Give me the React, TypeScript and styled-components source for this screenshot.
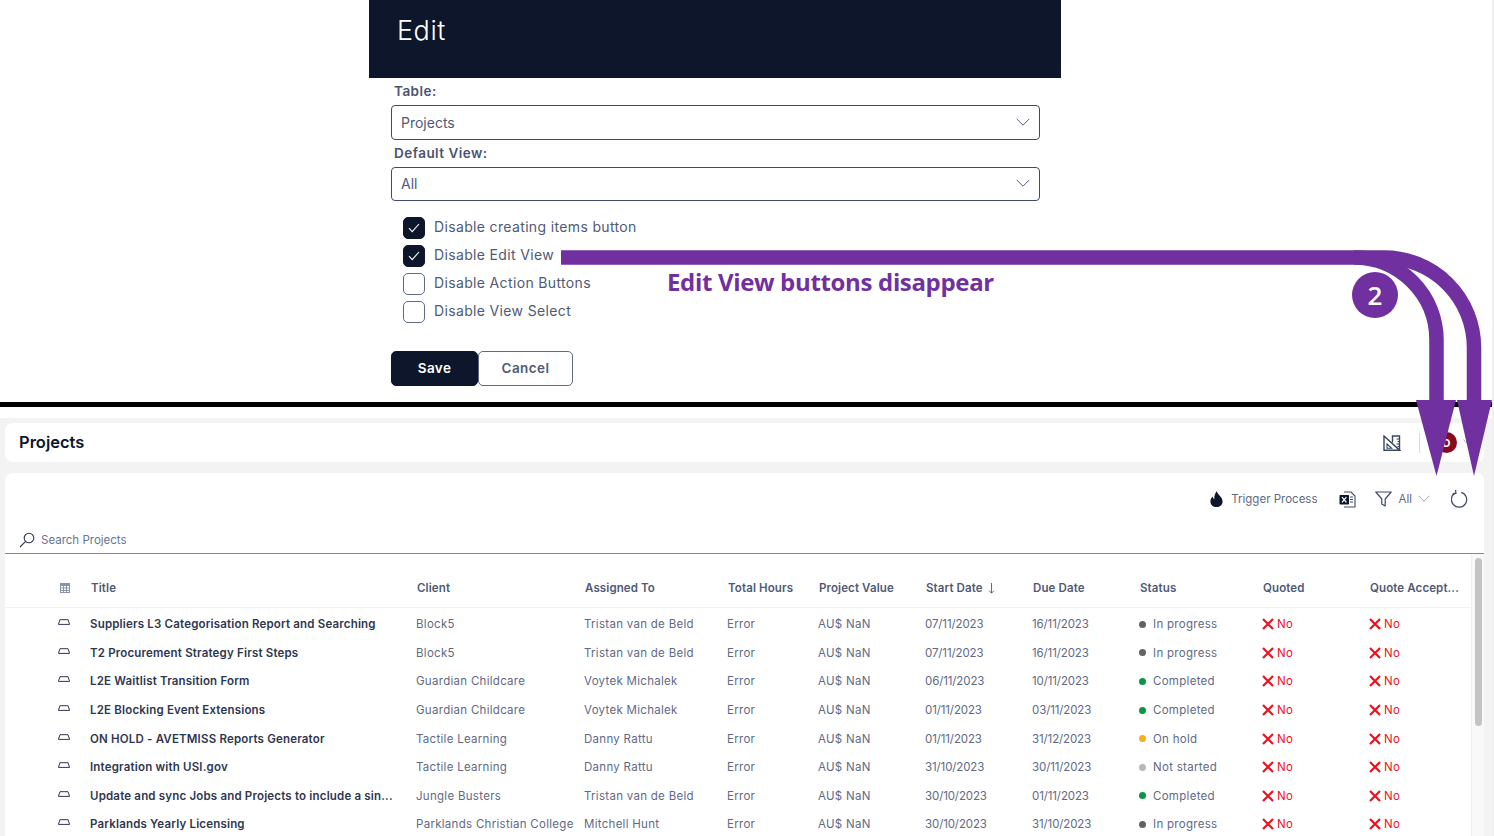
import React from "react";
import styled, { createGlobalStyle } from "styled-components";

const Global = createGlobalStyle`
  html, body {
    margin: 0;
    padding: 0;
    background: #fff;
    overflow: hidden;
  }
  * {
    box-sizing: border-box;
  }
`

const Page = styled.div`
  display: flex;
  width: 1494px;
  height: 836px;
  overflow: hidden;
  font-family: Inter, "Liberation Sans", sans-serif;
  background: #f0f0f0;
`

const Main = styled.div`
  position: relative;
  display: flex;
  flex-direction: column;
  width: 1492px;
  height: 836px;
  overflow: hidden;
  background: #fff;
`

const TopPane = styled.div`
  height: 402px;
  padding-left: 369px;
`

const Modal = styled.div`
  width: 692px;
`

const ModalHeader = styled.div`
  display: flex;
  align-items: center;
  height: 78px;
  padding: 0 0 17px 28px;
  background: #0d162a;
  color: #fff;
  font-size: 27px;
  letter-spacing: 0.02em;
  font-weight: 300;
`

const Form = styled.div`
  padding-left: 22px;
`

const FieldLabel = styled.div`
  display: flex;
  align-items: center;
  height: 27px;
  padding: 0 0 1px 3px;
  color: #4a5470;
  font-size: 13.5px;
  font-weight: 600;
  letter-spacing: 0.035em;
`

const Select = styled.div<{ $h: number }>`
  display: flex;
  align-items: center;
  justify-content: space-between;
  width: 649px;
  height: ${p => p.$h}px;
  padding: 0 9px 1px;
  border: 1px solid #3f4a66;
  border-radius: 4px;
  color: #4f5a75;
  font-size: 14px;
`

const CheckList = styled.div`
  display: flex;
  flex-direction: column;
  gap: 6px;
  margin: 16px 0 0 12px;
`

const CheckRow = styled.div`
  display: flex;
  align-items: center;
  gap: 9px;
  height: 22px;
  color: #4f5a75;
  font-size: 14px;
  letter-spacing: 0.025em;
`

const CheckLabel = styled.span`
  padding-bottom: 3px;
`

const CheckBox = styled.div<{ $on?: boolean }>`
  display: flex;
  align-items: center;
  justify-content: center;
  width: 22px;
  height: 22px;
  border-radius: 5px;
  border: 1px solid ${p => (p.$on ? "#0d162a" : "#5d6a88")};
  background: ${p => (p.$on ? "#0d162a" : "#fff")};
`

const Buttons = styled.div`
  display: flex;
  margin-top: 28px;
`

const Button = styled.div<{ $primary?: boolean }>`
  display: flex;
  align-items: center;
  justify-content: center;
  width: ${p => (p.$primary ? 87 : 95)}px;
  height: 35px;
  padding-bottom: 2px;
  border-radius: 5px;
  border: 1px solid ${p => (p.$primary ? "#0d162a" : "#5d6a88")};
  background: ${p => (p.$primary ? "#0d162a" : "#fff")};
  color: ${p => (p.$primary ? "#fff" : "#4f5a75")};
  font-size: 13.5px;
  font-weight: 600;
  letter-spacing: 0.03em;
`

const Rule = styled.div`
  height: 5px;
  background: #000;
  flex: none;
`

const BottomPane = styled.div`
  display: flex;
  flex-direction: column;
  gap: 11px;
  flex: 1;
  margin-top: 11px;
  padding: 5px 8px 0 5px;
  background: #f3f3f3;
  min-height: 0;
`

const TitleBar = styled.div`
  display: flex;
  align-items: center;
  justify-content: space-between;
  flex: none;
  height: 39px;
  padding: 0 10px 0 14px;
  background: #fff;
  border-radius: 8px;
`

const PageTitle = styled.div`
  color: #0d162a;
  font-size: 16.5px;
  font-weight: 600;
  padding-bottom: 1px;
`

const TitleTools = styled.div`
  display: flex;
  align-items: center;
`

const Divider = styled.div`
  width: 1px;
  height: 20px;
  margin: 0 16px 0 18px;
  background: #dcdcdc;
`

const Avatar = styled.div`
  display: flex;
  align-items: center;
  justify-content: center;
  width: 21px;
  height: 21px;
  margin-right: 6px;
  border-radius: 50%;
  background: #860b1e;
  color: #fff;
  font-size: 11px;
  font-weight: 700;
`

const Card = styled.div`
  position: relative;
  display: flex;
  flex-direction: column;
  flex: 1;
  background: #fff;
  border-radius: 8px 8px 0 0;
  overflow: hidden;
`

const Toolbar = styled.div`
  display: flex;
  align-items: center;
  justify-content: flex-end;
  height: 53px;
  padding: 0 16px 1px 0;
`

const Tool = styled.div<{ $gap: number; $inner?: number }>`
  display: flex;
  align-items: center;
  gap: ${p => p.$inner ?? 6}px;
  margin-left: ${p => p.$gap}px;
  color: #5f6a85;
  font-size: 11.5px;
`

const SearchBar = styled.div`
  display: flex;
  align-items: center;
  gap: 6px;
  height: 28px;
  padding-left: 14px;
  border-bottom: 1px solid #7e89a3;
  color: #6a7590;
  font-size: 11.5px;
`

const TableWrap = styled.div`
  display: flex;
  flex: 1;
  min-height: 0;
`

const Table = styled.div`
  flex: 1;
  min-width: 0;
`

const columns = "85px 326px 168px 143px 91px 107px 107px 107px 123px 107px 1fr"

const HeadRow = styled.div`
  display: grid;
  grid-template-columns: ${columns};
  align-items: center;
  height: 54px;
  padding-top: 15px;
  border-bottom: 1px solid #f2f2f2;
  color: #4f5a75;
  font-size: 11.5px;
  font-weight: 600;
  letter-spacing: 0.01em;
`

const HeadCell = styled.div`
  display: flex;
  align-items: center;
  gap: 5px;
  padding-left: 1px;
  white-space: nowrap;
`

const IconCell = styled.div<{ $lift?: number }>`
  display: flex;
  justify-content: flex-end;
  padding: 0 20px ${p => p.$lift ?? 0}px 0;
`

const BodyRow = styled.div`
  display: grid;
  grid-template-columns: ${columns};
  align-items: center;
  height: 28.6px;
  padding-top: 4px;
  color: #5f6a85;
  font-size: 11.5px;
  letter-spacing: 0.025em;
`

const Cell = styled.div`
  white-space: nowrap;
  overflow: hidden;
`

const DateCell = styled(Cell)`
  letter-spacing: -0.01em;
`

const TitleCell = styled(Cell)`
  padding-right: 12px;
  color: #2f3750;
  font-weight: 600;
  letter-spacing: 0.016em;
  text-overflow: ellipsis;
`

const StatusCell = styled.div`
  display: flex;
  align-items: center;
  gap: 7px;
`

const Dot = styled.span<{ $color: string }>`
  width: 7px;
  height: 7px;
  border-radius: 50%;
  background: ${p => p.$color};
`

const NoCell = styled.div`
  display: flex;
  align-items: center;
  gap: 3px;
  color: #f01020;
  font-size: 11.5px;
`

const ScrollTrack = styled.div`
  flex: none;
  width: 13px;
  padding: 4px 2px 0 3px;
  background: #f9f9f9;
  border-left: 1px solid #f0f0f0;
`

const ScrollThumb = styled.div`
  height: 168px;
  border-radius: 4px;
  background: #c4c4c4;
`

const Overlay = styled.svg`
  position: absolute;
  left: 0;
  top: 0;
  pointer-events: none;
`

const Callout = styled.div`
  position: absolute;
  left: 667px;
  top: 265px;
  color: #7030a0;
  font-family: "Open Sans", sans-serif;
  font-size: 24px;
  font-weight: 700;
  letter-spacing: -0.014em;
  white-space: nowrap;
`

const Badge = styled.div`
  position: absolute;
  left: 1352px;
  top: 272px;
  display: flex;
  align-items: center;
  justify-content: center;
  width: 46px;
  height: 46px;
  border-radius: 50%;
  background: #7030a0;
  color: #fff;
  font-family: "Open Sans", sans-serif;
  font-size: 26px;
  font-weight: 600;
`

const Chevron = ({ size = 14, color = "#4f5a75" }: { size?: number; color?: string }) => (
  <svg width={size} height={size * 0.6} viewBox="0 0 14 8" fill="none" stroke={color} strokeWidth="1">
    <path d="M0.7 0.7 L7 7 L13.3 0.7" />
  </svg>
)

const Check = () => (
  <svg width="12" height="10" viewBox="0 0 12 10" fill="none" stroke="#fff" strokeWidth="1.1">
    <path d="M1 5.2 L4.2 8.6 L11 1" />
  </svg>
)

const RulerIcon = () => (
  <svg width="18" height="16" viewBox="0 0 18 16" fill="none" stroke="#3a4560" strokeWidth="1.4">
    <path d="M1 1 L16.5 15.2 H1 Z" />
    <path d="M4 9 L8.6 13.2 H4 Z" strokeWidth="1.1" />
    <path d="M9.5 7.5 V1 H16.5 V15" />
    <path d="M13.5 4 H16.5 M14.5 6.5 H16.5 M13.5 9 H16.5 M14.5 11.5 H16.5" strokeWidth="1" />
  </svg>
)

const FlameIcon = () => (
  <svg width="13" height="16" viewBox="0 0 13 16" fill="#0d162a">
    <path d="M6.8 0 C7 3.2 12.6 5.8 12.6 10.4 C12.6 13.7 9.9 16 6.5 16 C3 16 0.4 13.6 0.4 10.4 C0.4 8.4 1.4 6.8 2.8 5.6 C2.9 6.9 3.4 7.7 4.3 8.2 C4.1 5 5.1 2 6.8 0 Z" />
  </svg>
)

const ExcelIcon = () => (
  <svg width="17" height="17" viewBox="0 0 17 17" fill="none">
    <path d="M5 1 H12 L16 5 V16 H5" stroke="#3f4a66" strokeWidth="1.1" />
    <path d="M11 6 H14 M11 8.5 H14 M11 11 H14" stroke="#3f4a66" strokeWidth="1" />
    <rect x="0.5" y="4" width="9.5" height="9.5" rx="0.8" fill="#0d162a" />
    <path d="M3 6.2 L7.4 11.4 M7.4 6.2 L3 11.4" stroke="#fff" strokeWidth="1.3" />
  </svg>
)

const FilterIcon = () => (
  <svg width="17" height="16" viewBox="0 0 17 16" fill="none" stroke="#3f4a66" strokeWidth="1.2" strokeLinejoin="round">
    <path d="M0.8 1 H16.2 L10.2 8 V15 L6.8 13 V8 Z" />
  </svg>
)

const RefreshIcon = () => (
  <svg width="17" height="18" viewBox="0 0 17 18" fill="none" stroke="#3f4a66" strokeWidth="1.25">
    <path d="M4.4 2.9 A7.6 7.6 0 1 0 10.3 2.3" />
    <path d="M4.6 0 L4.9 3.4 L1.8 3.7" />
  </svg>
)

const SearchIcon = () => (
  <svg width="16" height="16" viewBox="0 0 16 16" fill="none" stroke="#2f3750" strokeWidth="1.1">
    <circle cx="10" cy="6" r="4.8" />
    <path d="M6.4 9.6 L1 15" />
  </svg>
)

const ColumnsIcon = () => (
  <svg width="10" height="10" viewBox="0 0 10 10" fill="#8b93a8">
    <path d="M0 0 H10 V10 H0 Z M1 3 V4.5 H3 V3 Z M4 3 V4.5 H6 V3 Z M7 3 V4.5 H9 V3 Z M1 5.5 V7 H3 V5.5 Z M4 5.5 V7 H6 V5.5 Z M7 5.5 V7 H9 V5.5 Z M1 8 V9 H3 V8 Z M4 8 V9 H6 V8 Z M7 8 V9 H9 V8 Z" fillRule="evenodd" />
  </svg>
)

const RowIcon = () => (
  <svg width="12" height="6" viewBox="0 0 12 6" fill="none" stroke="#2f3750" strokeWidth="1">
    <path d="M0.4 5.4 H11.6 L10 0.7 H2 Z" />
  </svg>
)

const SortArrow = () => (
  <svg width="7" height="11" viewBox="0 0 7 11" fill="none" stroke="#4f5a75" strokeWidth="0.9">
    <path d="M3.5 0 V10 M1 7.6 L3.5 10.2 L6 7.6" />
  </svg>
)

const Cross = () => (
  <svg width="12" height="12" viewBox="0 0 12 12" fill="none" stroke="#f01020" strokeWidth="2.2">
    <path d="M1 1 L11 11 M11 1 L1 11" />
  </svg>
)

const headers = ["Title", "Client", "Assigned To", "Total Hours", "Project Value", "Start Date", "Due Date", "Status", "Quoted", "Quote Accept..."]

const statusColor: Record<string, string> = {
  "In progress": "#636363",
  "Completed": "#0b9444",
  "On hold": "#f5ad25",
  "Not started": "#b8b8b8",
}

const rows = [
  ["Suppliers L3 Categorisation Report and Searching", "Block5", "Tristan van de Beld", "07/11/2023", "16/11/2023", "In progress"],
  ["T2 Procurement Strategy First Steps", "Block5", "Tristan van de Beld", "07/11/2023", "16/11/2023", "In progress"],
  ["L2E Waitlist Transition Form", "Guardian Childcare", "Voytek Michalek", "06/11/2023", "10/11/2023", "Completed"],
  ["L2E Blocking Event Extensions", "Guardian Childcare", "Voytek Michalek", "01/11/2023", "03/11/2023", "Completed"],
  ["ON HOLD - AVETMISS Reports Generator", "Tactile Learning", "Danny Rattu", "01/11/2023", "31/12/2023", "On hold"],
  ["Integration with USI.gov", "Tactile Learning", "Danny Rattu", "31/10/2023", "30/11/2023", "Not started"],
  ["Update and sync Jobs and Projects to include a sin...", "Jungle Busters", "Tristan van de Beld", "30/10/2023", "01/11/2023", "Completed"],
  ["Parklands Yearly Licensing", "Parklands Christian College", "Mitchell Hunt", "30/10/2023", "31/10/2023", "In progress"],
]

const checks = [
  { label: "Disable creating items button", on: true },
  { label: "Disable Edit View", on: true },
  { label: "Disable Action Buttons", on: false },
  { label: "Disable View Select", on: false },
]

const No = () => (
  <NoCell>
    <Cross />
    No
  </NoCell>
)

const App = () => {
  return (
    <Page>
      <Global />
      <Main>
        <TopPane>
          <Modal>
            <ModalHeader>Edit</ModalHeader>
            <Form>
              <FieldLabel>Table:</FieldLabel>
              <Select $h={35}>
                Projects
                <Chevron />
              </Select>
              <FieldLabel>Default View:</FieldLabel>
              <Select $h={34}>
                All
                <Chevron />
              </Select>
              <CheckList>
                {checks.map(c => (
                  <CheckRow key={c.label}>
                    <CheckBox $on={c.on}>{c.on && <Check />}</CheckBox>
                    <CheckLabel>{c.label}</CheckLabel>
                  </CheckRow>
                ))}
              </CheckList>
              <Buttons>
                <Button $primary>Save</Button>
                <Button>Cancel</Button>
              </Buttons>
            </Form>
          </Modal>
        </TopPane>
        <Rule />
        <BottomPane>
          <TitleBar>
            <PageTitle>Projects</PageTitle>
            <TitleTools>
              <RulerIcon />
              <Divider />
              <Avatar>D</Avatar>
              <Chevron size={11} color="#8b93a8" />
            </TitleTools>
          </TitleBar>
          <Card>
            <Toolbar>
              <Tool $gap={0} $inner={8}>
                <FlameIcon />
                <span>Trigger Process</span>
              </Tool>
              <Tool $gap={22}>
                <ExcelIcon />
              </Tool>
              <Tool $gap={19}>
                <FilterIcon />
                <span>All</span>
                <Chevron size={12} color="#8b93a8" />
              </Tool>
              <Tool $gap={21}>
                <RefreshIcon />
              </Tool>
            </Toolbar>
            <SearchBar>
              <SearchIcon />
              Search Projects
            </SearchBar>
            <TableWrap>
              <Table>
                <HeadRow>
                  <IconCell>
                    <ColumnsIcon />
                  </IconCell>
                  {headers.map(h => (
                    <HeadCell key={h}>
                      {h}
                      {h === "Start Date" && <SortArrow />}
                    </HeadCell>
                  ))}
                </HeadRow>
                {rows.map(r => (
                  <BodyRow key={r[0]}>
                    <IconCell $lift={4}>
                      <RowIcon />
                    </IconCell>
                    <TitleCell>{r[0]}</TitleCell>
                    <Cell>{r[1]}</Cell>
                    <Cell>{r[2]}</Cell>
                    <Cell>Error</Cell>
                    <Cell>AU$ NaN</Cell>
                    <DateCell>{r[3]}</DateCell>
                    <DateCell>{r[4]}</DateCell>
                    <StatusCell>
                      <Dot $color={statusColor[r[5]]} />
                      {r[5]}
                    </StatusCell>
                    <No />
                    <No />
                  </BodyRow>
                ))}
              </Table>
              <ScrollTrack>
                <ScrollThumb />
              </ScrollTrack>
            </TableWrap>
          </Card>
        </BottomPane>

        <Overlay width="1492" height="836" viewBox="0 0 1492 836" fill="none">
          <path d="M561 257.5 H1354 A82.5 82.5 0 0 1 1436.5 340 V402" stroke="#7030a0" strokeWidth="14.5" />
          <path d="M1354 257.5 H1384 A90 90 0 0 1 1474 347.5 V402" stroke="#7030a0" strokeWidth="14.5" />
          <path d="M1416 400 H1456 L1436.5 476 Z" fill="#7030a0" />
          <path d="M1457 400 H1492 L1474 476 Z" fill="#7030a0" />
        </Overlay>
        <Callout>Edit View buttons disappear</Callout>
        <Badge>2</Badge>
      </Main>
    </Page>
  )
}

export default App
